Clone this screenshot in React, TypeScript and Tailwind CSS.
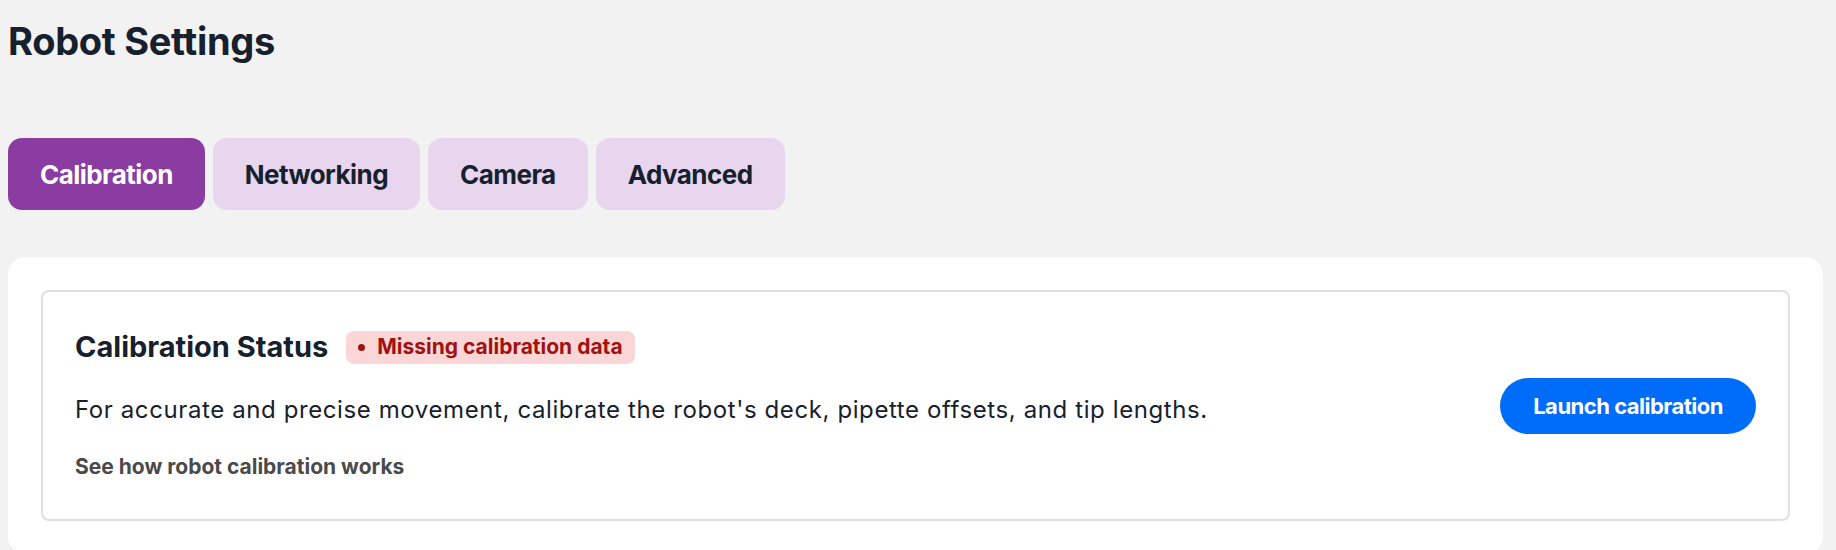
import React from "react";

const tabs = ["Calibration", "Networking", "Camera", "Advanced"];

export default function App() {
  return (
    <div
      className="min-h-screen bg-[#f2f2f2] pl-2 pr-[13px] pt-[18px] text-[#16212d]"
      style={{ fontFamily: "Inter, Roboto, 'Liberation Sans', sans-serif" }}
    >
      <h1 className="text-[38px] leading-[47px] font-bold tracking-[-0.3px]">Robot Settings</h1>
      <div className="mt-[73px] flex gap-2">
        {tabs.map((t, i) => (
          <button
            key={t}
            className={
              i === 0
                ? "h-[72px] px-8 rounded-[14px] text-[26px] font-bold tracking-[-0.55px] bg-[#8a3ca1] text-white"
                : "h-[72px] px-8 rounded-[14px] text-[26px] font-bold tracking-[-0.55px] bg-[#e7d6ed] text-[#16212d]"
            }
          >
            {t}
          </button>
        ))}
      </div>
      <div className="mt-[47px] bg-white rounded-[18px] p-[33px]">
        <div className="border-2 border-[#e0e0e0] rounded-lg flex items-center justify-between pl-8 pr-8 pt-[37px] pb-[36px]">
          <div className="flex flex-col">
            <div className="flex items-center h-9">
              <h2 className="text-[29px] leading-9 font-bold">Calibration Status</h2>
              <span className="ml-[18px] h-[33px] flex items-center gap-3 px-3 rounded-lg bg-[#fad6d6] text-[#a01212] text-[21px] font-bold">
                <span className="w-[7px] h-[7px] rounded-full bg-[#a01212]" />
                Missing calibration data
              </span>
            </div>
            <p className="mt-[27px] text-[24px] leading-9 tracking-[0.6px]">
              For accurate and precise movement, calibrate the robot's deck, pipette offsets, and tip lengths.
            </p>
            <a className="mt-[22px] text-[21px] leading-[33px] font-bold text-[#4a4a4a]">
              See how robot calibration works
            </a>
          </div>
          <button className="h-14 px-[33px] rounded-full bg-[#006cfa] text-white text-[22px] font-bold tracking-[-0.5px]">
            Launch calibration
          </button>
        </div>
      </div>
    </div>
  );
}
